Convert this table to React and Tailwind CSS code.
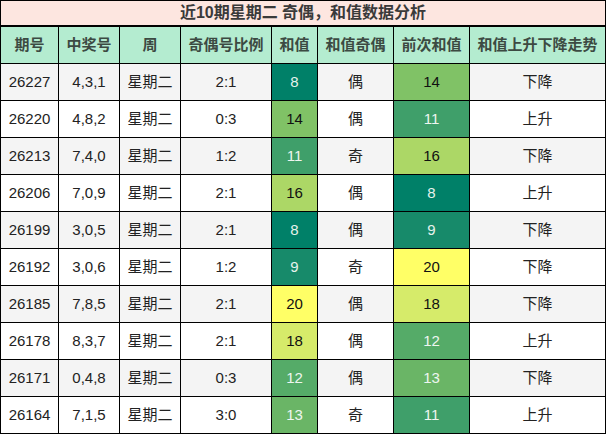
const rows = [
  { id: "26227", nums: "4,3,1", week: "星期二", ratio: "2:1", sum: 8, parity: "偶", prev: 14, trend: "下降" },
  { id: "26220", nums: "4,8,2", week: "星期二", ratio: "0:3", sum: 14, parity: "偶", prev: 11, trend: "上升" },
  { id: "26213", nums: "7,4,0", week: "星期二", ratio: "1:2", sum: 11, parity: "奇", prev: 16, trend: "下降" },
  { id: "26206", nums: "7,0,9", week: "星期二", ratio: "2:1", sum: 16, parity: "偶", prev: 8, trend: "上升" },
  { id: "26199", nums: "3,0,5", week: "星期二", ratio: "2:1", sum: 8, parity: "偶", prev: 9, trend: "下降" },
  { id: "26192", nums: "3,0,6", week: "星期二", ratio: "1:2", sum: 9, parity: "奇", prev: 20, trend: "下降" },
  { id: "26185", nums: "7,8,5", week: "星期二", ratio: "2:1", sum: 20, parity: "偶", prev: 18, trend: "下降" },
  { id: "26178", nums: "8,3,7", week: "星期二", ratio: "2:1", sum: 18, parity: "偶", prev: 12, trend: "上升" },
  { id: "26171", nums: "0,4,8", week: "星期二", ratio: "0:3", sum: 12, parity: "偶", prev: 13, trend: "下降" },
  { id: "26164", nums: "7,1,5", week: "星期二", ratio: "3:0", sum: 13, parity: "奇", prev: 11, trend: "上升" },
];

// colour scale for 和值 cells, 8 = dark green, 20 = yellow
const scale = {
  8: "bg-[#008068] text-[#e6f2ec]",
  9: "bg-[#178a6a] text-[#e6f2ec]",
  11: "bg-[#3f9f6a] text-[#eef6f0]",
  12: "bg-[#55ab68] text-[#eef6f0]",
  13: "bg-[#6ab566] text-[#eef6f0]",
  14: "bg-[#80c266] text-[#111]",
  16: "bg-[#acd766] text-[#111]",
  18: "bg-[#d6eb6a] text-[#111]",
  20: "bg-[#ffff66] text-[#111]",
};

const widths = ["w-[58px]", "w-[61px]", "w-[61px]", "w-[91px]", "w-[46px]", "w-[76px]", "w-[76px]", "w-[136px]"];
const headers = ["期号", "中奖号", "周", "奇偶号比例", "和值", "和值奇偶", "前次和值", "和值上升下降走势"];

function Cell({ i, className = "", children }) {
  return (
    <div className={`${widths[i]} shrink-0 flex items-center justify-center border-r border-black ${className}`}>
      {children}
    </div>
  );
}

export default function App() {
  return (
    <div
      className="w-[606px] h-[434px] bg-white border-t border-l border-black text-[15px] text-[#222]"
      style={{ fontFamily: '"Liberation Sans", "Noto Sans CJK SC", sans-serif' }}
    >
      <div className="h-[26px] flex items-center justify-center bg-[#fde6e0] border-r border-b-2 border-black text-[16px] font-bold text-[#3a3a3a]">
        近10期星期二 奇偶，和值数据分析
      </div>
      <div className="h-[37px] flex bg-[#b4ecd0] border-b border-black font-bold text-[#3c4a42]">
        {headers.map((h, i) => (
          <Cell key={h} i={i}>{h}</Cell>
        ))}
      </div>
      {rows.map((r, idx) => {
        const bg = idx % 2 === 0 ? "bg-[#f4f4f4]" : "bg-white";
        return (
          <div key={r.id} className={`h-[37px] flex border-b border-black ${bg}`}>
            <Cell i={0}>{r.id}</Cell>
            <Cell i={1}>{r.nums}</Cell>
            <Cell i={2}>{r.week}</Cell>
            <Cell i={3}>{r.ratio}</Cell>
            <Cell i={4} className={scale[r.sum]}>{r.sum}</Cell>
            <Cell i={5}>{r.parity}</Cell>
            <Cell i={6} className={scale[r.prev]}>{r.prev}</Cell>
            <Cell i={7}>{r.trend}</Cell>
          </div>
        );
      })}
    </div>
  );
}
